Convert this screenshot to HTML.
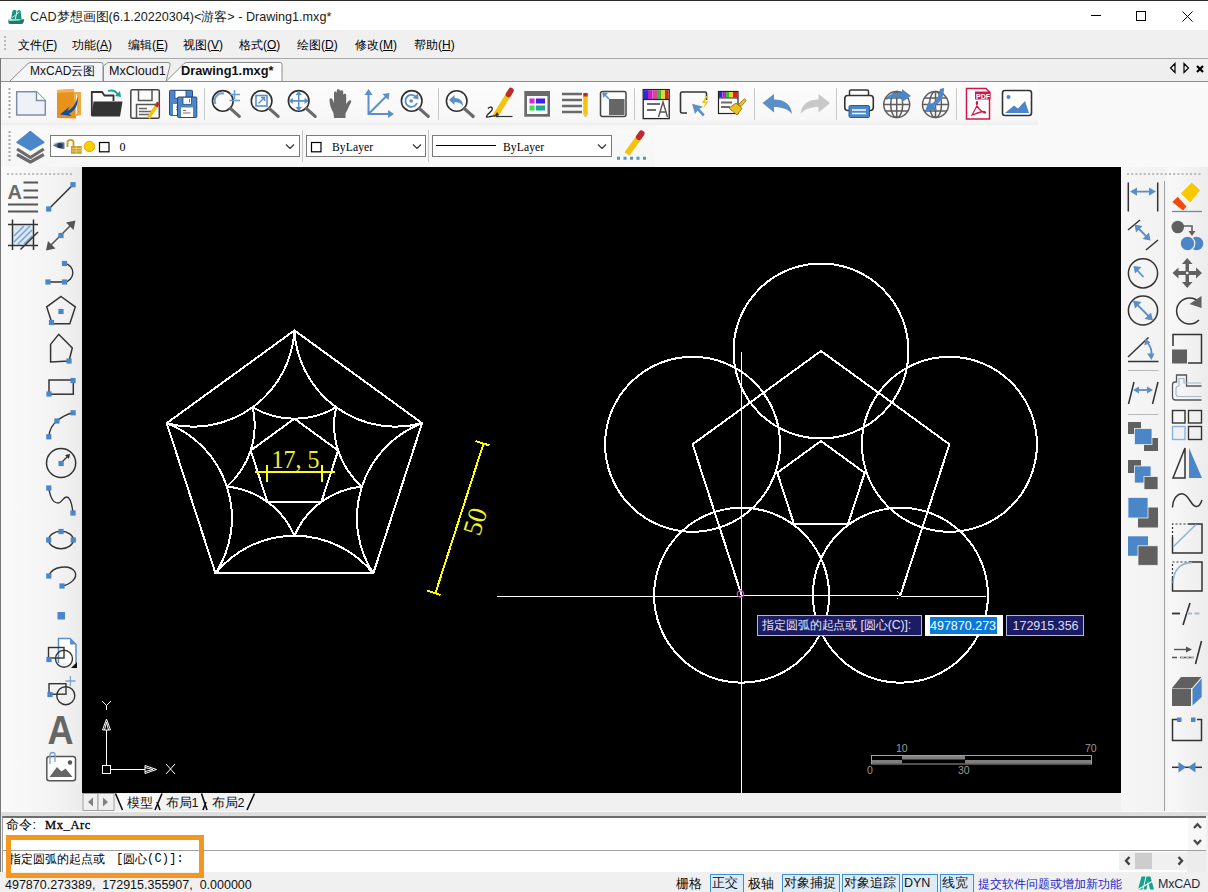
<!DOCTYPE html>
<html><head><meta charset="utf-8">
<style>
*{margin:0;padding:0;box-sizing:border-box}
html,body{width:1208px;height:892px;overflow:hidden;background:#f0f0f0;font-family:"Liberation Sans",sans-serif;font-size:12px;color:#000;line-height:16px}
.a{position:absolute}
#title{left:0;top:0;width:1208px;height:30px;background:#fff;border-top:1px solid #2b2b2b}
#menu{left:0;top:30px;width:1208px;height:28px;background:#f0f0f0}
#tabs{left:0;top:58px;width:1208px;height:24px;background:#efefef}
#tb0{left:0;top:82px;width:1208px;height:85px;background:#f9f9f9}
#tb1{left:0;top:82px;width:1038px;height:43px;background:linear-gradient(#fcfcfc,#f7f7f7 88%,#eeeeee)}
#tb2{left:0;top:125px;width:655px;height:42px;background:linear-gradient(#f4f4f4,#f9f9f9 12%,#f6f6f6)}
#canvas{left:82px;top:167px;width:1039px;height:626px;background:#000;overflow:hidden}
#ltb{left:0;top:167px;width:82px;height:644px;background:linear-gradient(to right,#fafafa,#f3f3f3 70%,#ebebeb)}
#rtb{left:1121px;top:167px;width:87px;height:644px;background:linear-gradient(to right,#f6f6f6,#f2f2f2 50%,#f8f8f8 55%,#ececec)}
#laytabs{left:82px;top:793px;width:1039px;height:18px;background:#f0f0f0}
#cmd{left:2px;top:816px;width:1204px;height:56px;background:#fff;border-top:2px solid #6d6d6d;border-left:1px solid #a0a0a0}
#status{left:0;top:872px;width:1208px;height:20px;background:#f0f0f0}
.sb{top:874px;height:19px;border:1px solid #3d8fd1;background:#dcebf8;font-size:12.5px;color:#111;text-align:left;padding-left:1px;line-height:17px;white-space:nowrap;overflow:hidden}
.mi{position:absolute;top:37px;font-size:12px}
</style></head><body>
<div id="title" class="a">
<svg class="a" style="left:0;top:0" width="30" height="30" viewBox="0 0 30 30">
<path d="M11 18 L12.5 10 Q13 8.8 14.5 9 L16 9.3 Q16.8 9.6 16.5 10.6 L14.8 18 Z" fill="#1a9080"/>
<path d="M15.8 18 L17.5 10 Q18 8.8 19.2 9.2 L20.2 9.6 Q21 10 20.8 11 L21.5 18 Z" fill="#1a9080"/>
<path d="M11.5 17 L19.5 11" stroke="#a8f0e0" stroke-width="1"/>
<path d="M8 18.8 L24 18.2 Q24.5 18 24 20 L23 22.3 Q22.5 23 21.5 23 L10 23 Q8.8 23 8.5 22 Z" fill="#1f7a6a"/>
<path d="M8.5 19.5 L20 19" stroke="#e0fff8" stroke-width="0.8"/>
</svg>
<div class="a" style="left:30px;top:8px;font-size:12.6px;white-space:nowrap;color:#1a1a1a">CAD梦想画图(6.1.20220304)&lt;游客&gt; - Drawing1.mxg*</div>
<div class="a" style="left:1091px;top:14px;width:10px;height:1px;background:#000"></div>
<div class="a" style="left:1136px;top:9.5px;width:10px;height:10px;border:1px solid #000"></div>
<svg class="a" style="left:1182px;top:9.5px" width="11" height="11"><path d="M0.5 0.5 L10.5 10.5 M10.5 0.5 L0.5 10.5" stroke="#000" stroke-width="1"/></svg>
</div>
<div id="menu" class="a">
<div class="a" style="left:4px;top:6px;width:2px;height:16px;background:repeating-linear-gradient(#bbb 0 2px,transparent 2px 4px)"></div>
<div class="mi a" style="left:18px;top:7px">文件(<u>F</u>)</div>
<div class="mi a" style="left:72px;top:7px">功能(<u>A</u>)</div>
<div class="mi a" style="left:128px;top:7px">编辑(<u>E</u>)</div>
<div class="mi a" style="left:183px;top:7px">视图(<u>V</u>)</div>
<div class="mi a" style="left:239px;top:7px">格式(<u>O</u>)</div>
<div class="mi a" style="left:297px;top:7px">绘图(<u>D</u>)</div>
<div class="mi a" style="left:355px;top:7px">修改(<u>M</u>)</div>
<div class="mi a" style="left:414px;top:7px">帮助(<u>H</u>)</div>
</div>
<div id="tabs" class="a">
<svg class="a" style="left:0;top:0" width="1208" height="24" viewBox="0 58 1208 24">
<path d="M0 58.5 H1208" stroke="#a8a8a8" stroke-width="1"/>
<path d="M9.5 81.5 L28 63.5 Q29 62.5 31 62.5 L101 62.5 Q103 62.5 103 64.5 L103 81.5" fill="#f4f6f9" stroke="#8c8c8c" stroke-width="1"/>
<path d="M103.5 81.5 L103.5 66 L108 62.5 L168 62.5 Q171 62.5 170 65.5 L166 81.5" fill="#f2f2f2" stroke="#8c8c8c" stroke-width="1"/>
<path d="M166 81.5 L184 63.5 Q185 62.5 187 62.5 L280 62.5 Q282 62.5 282 64.5 L282 81.5" fill="#fdfdfd" stroke="#8c8c8c" stroke-width="1"/>
<path d="M0 81.5 H1208" stroke="#8c8c8c" stroke-width="1"/>
</svg>
<div class="a" style="left:30px;top:5px;font-size:12px;color:#111">MxCAD云图</div>
<div class="a" style="left:109px;top:5px;font-size:12.6px;color:#111">MxCloud1</div>
<div class="a" style="left:181px;top:5px;font-size:12.8px;font-weight:bold;color:#111">Drawing1.mxg*</div>
<svg class="a" style="left:1168px;top:4px" width="40" height="14"><path d="M7 1.5 L2.5 6 L7 10.5 Z M16 1.5 L20.5 6 L16 10.5 Z" fill="none" stroke="#000" stroke-width="1.2"/><path d="M29 4 L35 10 M35 4 L29 10" stroke="#000" stroke-width="2.2"/></svg>
</div>
<div id="tb0" class="a"></div>
<div id="tb1" class="a"></div>
<svg class="a" style="left:0;top:82px" width="1208" height="43" viewBox="0 82 1208 43">
<defs>
<g id="lens"><circle cx="0" cy="0" r="10.3" fill="#fff" fill-opacity="0.5" stroke="#303030" stroke-width="1.6"/><path d="M7.5 7.5 L16.5 15.5" stroke="#6a6a6a" stroke-width="3.2" stroke-linecap="round"/></g>
</defs>
<!-- grip -->
<path d="M9.5 88 V119" stroke="#a8a8a8" stroke-width="2" stroke-dasharray="2 2"/>
<!-- new -->
<path d="M16.7 91.7 H36.5 L45.3 100.5 V115 H16.7 Z" fill="#eef2f8" stroke="#7d8ea6" stroke-width="1.5"/>
<path d="M36.5 91.7 V100.5 H45.3" fill="#fff" stroke="#7d8ea6" stroke-width="1.5"/>
<!-- import -->
<path d="M57 90 L74 89 L76 118.5 L57 118 Z" fill="#e8921e"/>
<path d="M74 92 H81 V115 L76 116 Z" fill="#f0a840"/>
<path d="M76.5 94 V114" stroke="#fff3d0" stroke-width="1"/>
<path d="M57 90 L74 89 L74 92 L57 93 Z" fill="#f5b050"/>
<path d="M77.5 97 C76 104 72 109 67.5 111 L69.5 106.5 L60 114.5 L71.5 116 L69 113.5 C75 111 78.5 105 77.5 97 Z" fill="#0f4fa0"/>
<!-- open -->
<path d="M91.8 115.8 V92 H102 L104.5 95.5 H113.5 V101" fill="none" stroke="#333" stroke-width="1.8"/>
<path d="M91.5 116.5 L93.5 101.5 H122.5 L120 116.5 Z" fill="#333"/>
<path d="M108 91 Q115 89 118 95" fill="none" stroke="#1aa090" stroke-width="1.8"/>
<path d="M115 96 L121 97 L120 91 Z" fill="#1aa090"/>
<!-- save -->
<rect x="130.8" y="89.8" width="28.5" height="28.5" rx="1.5" fill="#fbfbfb" stroke="#444" stroke-width="1.5"/>
<path d="M138.5 90 V100.5 H152 V90" fill="none" stroke="#555" stroke-width="1.5"/>
<path d="M136.5 118 V104.5 H158" fill="none" stroke="#555" stroke-width="1.5"/>
<path d="M139 108.5 H147 M139 111.5 H152 M139 114.5 H149" stroke="#666" stroke-width="1.3"/>
<path d="M148.5 118 L157 105" stroke="#f2c311" stroke-width="3.5"/>
<path d="M156 106.5 L158.5 102.5" stroke="#c0282d" stroke-width="3.5"/>
<!-- save as -->
<rect x="169.5" y="90.3" width="23" height="25" rx="1" fill="#4a86c8" stroke="#2a4878" stroke-width="1"/>
<rect x="175" y="90.5" width="11" height="8" fill="#fff" stroke="#2a4878" stroke-width="0.8"/>
<rect x="173" y="104" width="6" height="11" fill="#fff"/>
<path d="M176 107 H178.5 M176 109.5 H178.5" stroke="#555" stroke-width="0.8"/>
<rect x="177.5" y="97" width="19.3" height="20.5" rx="1" fill="#4a86c8" stroke="#2a4878" stroke-width="1"/>
<rect x="183" y="97.3" width="8.5" height="7" fill="#fff" stroke="#2a4878" stroke-width="0.8"/>
<path d="M189.5 99 V102.5" stroke="#777" stroke-width="1"/>
<rect x="181" y="107.5" width="12" height="9.5" fill="#fff"/>
<path d="M183 110.5 H186 M183 113 H190.5" stroke="#8a6a5a" stroke-width="1"/>
<!-- sep -->
<path d="M204.5 88 V120 M438.5 88 V120 M634.5 88 V120 M754.5 88 V120 M836.5 88 V120 M956.5 88 V120" stroke="#c8c8c8" stroke-width="1"/>
<!-- zoom in -->
<use href="#lens" x="222.8" y="100.9"/>
<path d="M215.5 104 A7.5 7.5 0 0 1 224 93.5" fill="none" stroke="#6a9ed0" stroke-width="2"/>
<path d="M234.5 90 V99 M229.5 94.5 H240 M229.5 100.5 H240" stroke="#6a9ed0" stroke-width="1.6"/>
<!-- zoom extents -->
<use href="#lens" x="261.6" y="100.9"/>
<rect x="256" y="95.5" width="11" height="10.5" fill="none" stroke="#5a8fc8" stroke-width="1.6"/>
<path d="M258.5 103.5 L264.5 97.5 M261 97.5 H264.5 V101" fill="none" stroke="#5a8fc8" stroke-width="1.4"/>
<!-- zoom pan -->
<use href="#lens" x="298.7" y="100.9"/>
<path d="M298.7 92 V110 M289.8 100.9 H307.6" stroke="#5a8fc8" stroke-width="1.6"/>
<path d="M298.7 91 L295.5 95 H302 Z M298.7 111 L295.5 107 H302 Z M288.8 100.9 L292.8 97.7 V104.1 Z M308.6 100.9 L304.6 97.7 V104.1 Z" fill="#5a8fc8"/>
<!-- hand -->
<path d="M333.5 113 C331 109 329.5 104 329.5 100 C329.5 98 331.5 97.5 332.5 99.5 L334 103 V93 C334 91 336.5 91 336.8 93 V101 V90.5 C337 88.8 339.7 88.8 340 90.5 V101 V91.5 C340.3 89.8 343 89.8 343.2 91.5 V102 V95 C343.5 93.3 346 93.3 346.2 95 V104 L348.5 101 C350 99.5 352 100.5 351 102.5 C349 106 347 111 345.5 113.5 V118 H334 Z" fill="#6a6a6a"/>
<!-- axes -->
<path d="M368.5 92 V114 H391 M368.5 114 L387 95.5" fill="none" stroke="#5a8fc8" stroke-width="2"/>
<path d="M368.5 89 L364.5 95 H372.5 Z M394 114 L388 110 V118 Z M389.5 93 L382.5 94 L388.5 100 Z" fill="#5a8fc8"/>
<!-- zoom previous -->
<use href="#lens" x="411.7" y="100.9"/>
<path d="M415.5 96.5 A6 6 0 1 0 417 103" fill="none" stroke="#5a8fc8" stroke-width="1.8"/>
<path d="M418 93.5 L418.5 99.5 L412.5 98 Z" fill="#5a8fc8"/>
<circle cx="411.2" cy="101" r="1.8" fill="#5a8fc8"/>
<!-- zoom back -->
<use href="#lens" x="456.7" y="101"/>
<path d="M449 100 L454.5 95 V98 C460 98 463 101 463 106 C461 103 458 102 454.5 102 V105 Z" fill="#5a8fc8"/>
<!-- pencil draw -->
<path d="M495 116.5 L509.5 93" stroke="#f2c311" stroke-width="5.5"/>
<path d="M508.5 94.5 L511 90.5" stroke="#c0282d" stroke-width="5.5" stroke-linecap="round"/>
<path d="M494 117 L497 112 L499 115 Z" fill="#333"/>
<path d="M488 108.5 C490 106 493 107 492 110 C491 112 486 115 486.5 117 C487.5 118 492 115.5 495 116" fill="none" stroke="#222" stroke-width="1.3"/>
<path d="M496 116.5 H512.5" stroke="#333" stroke-width="1.2"/>
<!-- layer props -->
<rect x="524.3" y="91" width="25.7" height="25.7" fill="#6a6a6a"/>
<rect x="527" y="96" width="20.5" height="18" fill="#fafafa"/>
<rect x="529.5" y="98.5" width="5" height="5" fill="#e020e0"/>
<rect x="536" y="98.5" width="9" height="5" fill="#4020e8"/>
<rect x="529.5" y="105.5" width="5" height="5" fill="#40e040"/>
<rect x="536" y="105.5" width="9" height="5" fill="#20a8a0"/>
<!-- lines -->
<path d="M562 94 H582 M562 100 H582 M562 106 H582 M562 112 H582" stroke="#6a6a6a" stroke-width="2.5"/>
<path d="M585.5 96 V114.5" stroke="#f2c311" stroke-width="4.5"/>
<path d="M585.5 93 V96.5" stroke="#c0282d" stroke-width="4.5"/>
<path d="M583.3 114.5 L585.5 117.5 L587.7 114.5 Z" fill="#f2c311"/>
<!-- quad -->
<rect x="600.5" y="91.5" width="25.5" height="25" rx="2" fill="#fafafa" stroke="#444" stroke-width="1.5"/>
<path d="M609 99 H624.5 V115 H609 Z" fill="#666"/>
<path d="M609 99 L603 93" stroke="#5a8fc8" stroke-width="1.6"/>
<path d="M602.5 92.5 L603 98 L608 93 Z" fill="#5a8fc8"/>
<!-- text style -->
<rect x="643.2" y="89.6" width="26" height="29" fill="#fff" stroke="#222" stroke-width="1.3"/>
<rect x="644" y="90.2" width="4" height="9" fill="#2a2ae0"/><rect x="648" y="90.2" width="4.5" height="9" fill="#c020c0"/><rect x="652.5" y="90.2" width="4.5" height="9" fill="#e040a0"/><rect x="657" y="90.2" width="4" height="9" fill="#30c030"/><rect x="661" y="90.2" width="4" height="9" fill="#f0d020"/><rect x="665" y="90.2" width="3.5" height="9" fill="#d02020"/>
<path d="M643 99.5 H669" stroke="#222" stroke-width="1.2"/>
<path d="M647 104 H660 M647 110 H656" stroke="#6a6a6a" stroke-width="2.2"/>
<path d="M658.5 117 L663 102 L667.5 117 M660 112 H666" fill="none" stroke="#555" stroke-width="1.4"/>
<!-- select -->
<path d="M687 113 H682 Q680.5 113 680.5 111.5 V93.5 Q680.5 92 682 92 H705 Q706.5 92 706.5 93.5 V100" fill="none" stroke="#333" stroke-width="1.6"/>
<path d="M693 103 L703.5 107.5 L699.5 109 L704 115.5 L702 117 L697.5 110.5 L694.5 113.5 Z" fill="#5a8fc8" transform="rotate(-8 698 110)"/>
<path d="M706 96 L702 103 H705.5 L703 109 L708.5 101.5 H705 L707.5 96 Z" fill="#f2c311"/>
<!-- match prop -->
<rect x="718.5" y="91.5" width="19.5" height="22" fill="#fff" stroke="#222" stroke-width="1.2"/>
<rect x="719" y="92" width="3.5" height="5.5" fill="#2a2ae0"/><rect x="722.5" y="92" width="3.5" height="5.5" fill="#c020c0"/><rect x="726" y="92" width="3.5" height="5.5" fill="#30c030"/><rect x="729.5" y="92" width="3.5" height="5.5" fill="#f0d020"/><rect x="733" y="92" width="4.5" height="5.5" fill="#d02020"/>
<path d="M718.5 98 H738" stroke="#222" stroke-width="1"/>
<path d="M721 102.5 H732 M721 107 H730" stroke="#6a6a6a" stroke-width="2"/>
<path d="M729 108 L736 103 L742 108.5 L737 115 Z" fill="#e8c020" stroke="#8a6a10" stroke-width="0.8"/>
<path d="M738.5 104.5 L743.5 99.5 C745 98 746.5 100 745.5 101.5 L741 106.5 Z" fill="#e8c020" stroke="#8a6a10" stroke-width="0.8"/>
<!-- undo -->
<path d="M762.5 103 L774 94 V99.5 C784 99.5 791 104 792 114 C788 109 782 107 774 107 V112.5 Z" fill="#5a8fc8"/>
<!-- redo -->
<path d="M830 103 L818.5 94 V99.5 C808.5 99.5 801.5 104 800.5 114 C804.5 109 810.5 107 818.5 107 V112.5 Z" fill="#c8c8c8"/>
<!-- print -->
<rect x="849.5" y="90" width="19" height="6" rx="1.5" fill="#fff" stroke="#333" stroke-width="1.5"/>
<rect x="844.8" y="95.5" width="28.5" height="15" rx="3" fill="#fff" stroke="#333" stroke-width="1.6"/>
<rect x="849" y="105.5" width="20.5" height="12" rx="1.5" fill="#4a86c8" stroke="#2a5a98" stroke-width="1"/>
<path d="M852 110 H866 M852 113.5 H866" stroke="#fff" stroke-width="1.3"/>
<!-- globes -->
<g fill="none" stroke="#5e5e5e" stroke-width="1.5">
<circle cx="896.7" cy="104.6" r="13"/><ellipse cx="896.7" cy="104.6" rx="6" ry="13"/><path d="M896.7 91.6 V117.6 M883.7 104.6 H909.7 M885.5 98 H908 M885.5 111 H908"/>
<circle cx="935.5" cy="104.6" r="13"/><ellipse cx="935.5" cy="104.6" rx="6" ry="13"/><path d="M935.5 91.6 V117.6 M922.5 104.6 H948.5 M924.3 98 H946.7 M924.3 111 H946.7"/>
</g>
<path d="M886 100 C888 94 895 92 902 93 V89 L911 96 L902 102 V98 C896 97.5 890 98 886 100 Z" fill="#4a86c8"/>
<path d="M940 89 L944 88 C944 96 941 103 934 106 L937 110 L925 111 L929 101 L931 104 C937 101 939 95 940 89 Z" fill="#4a86c8"/>
<!-- pdf -->
<path d="M966.5 88.5 H986 L989.5 92 V119 H966.5 Z" fill="#fff" stroke="#d01848" stroke-width="1.5"/>
<rect x="975" y="91.5" width="15.5" height="8" fill="#d01848"/>
<text x="976" y="98.5" font-family="Liberation Sans" font-size="7" font-weight="bold" fill="#fff">PDF</text>
<path d="M972 115 C975 110 978 104 977.5 102 C977 101 976 102 976.5 104 C977 107 981 112 985 113 C986 113.5 985.5 111 983 111.5 C980 112 975 114 972 115 Z" fill="none" stroke="#d01848" stroke-width="1.3"/>
<!-- image -->
<rect x="1002.5" y="90.5" width="29" height="25" rx="2.5" fill="#fff" stroke="#333" stroke-width="1.6"/>
<circle cx="1008.5" cy="97" r="2" fill="#4a86c8"/>
<path d="M1005 113 L1014 105.5 L1018 108.5 L1025 101 L1029 113 Z" fill="#4a86c8"/>
</svg>

<div id="tb2" class="a"></div>
<svg class="a" style="left:0;top:125px" width="660" height="42" viewBox="0 125 660 42">
<path d="M9.5 131 V161" stroke="#a8a8a8" stroke-width="2" stroke-dasharray="2 2"/>
<path d="M17 149 L30.4 157.5 L43.8 149" fill="none" stroke="#6a6a6a" stroke-width="3.2" stroke-linejoin="round"/>
<path d="M17 154.5 L30.4 162 L43.8 154.5" fill="none" stroke="#6a6a6a" stroke-width="3.2" stroke-linejoin="round"/>
<path d="M17 142.4 L30.4 131.5 L43.8 142.4 L30.4 150 Z" fill="#4a86c8" stroke="#4a86c8" stroke-width="1.5" stroke-linejoin="round"/>
<path d="M302.5 130 V162 M428.5 130 V162" stroke="#c8c8c8" stroke-width="1"/>
<rect x="50.5" y="135.5" width="249" height="21" fill="#fff" stroke="#7a7a7a" stroke-width="1"/>
<rect x="306.5" y="135.5" width="119" height="21" fill="#fff" stroke="#7a7a7a" stroke-width="1"/>
<rect x="432.5" y="135.5" width="179" height="21" fill="#fff" stroke="#7a7a7a" stroke-width="1"/>
<path d="M286 144.5 L290 148.5 L294 144.5 M413 144.5 L417 148.5 L421 144.5 M598 144.5 L602 148.5 L606 144.5" fill="none" stroke="#333" stroke-width="1.2"/>
<!-- eye -->
<path d="M53 145.5 Q58.5 141 64.5 142.5 V148.8 Q58.5 149.5 53 145.5 Z" fill="#5a7090"/>
<circle cx="60" cy="145.5" r="2.6" fill="#24375a"/>
<path d="M53 144.5 Q57 142 62 142" stroke="#a0b0c8" stroke-width="0.8" fill="none"/>
<!-- lock -->
<path d="M67.5 147 V142.5 Q67.5 139.8 70.5 139.8 Q73.5 139.8 73.5 142.5 V146" fill="none" stroke="#c89a20" stroke-width="1.8"/>
<rect x="71" y="146" width="10.7" height="7.8" fill="#c8a030"/>
<path d="M72 148.5 H81 M72 151 H81 M76.3 146 V154" stroke="#f0d878" stroke-width="0.8"/>
<!-- sun -->
<circle cx="89.4" cy="146.4" r="5.2" fill="#f8d000" stroke="#f0a000" stroke-width="1"/>
<rect x="99.5" y="142.5" width="9.5" height="9.3" fill="none" stroke="#000" stroke-width="1.2"/>
<rect x="311.5" y="142.5" width="9.5" height="9.3" fill="none" stroke="#000" stroke-width="1.2"/>
<path d="M436 145.5 H496" stroke="#000" stroke-width="1"/>
<!-- pencil -->
<path d="M627 154 L639.5 136.5" stroke="#f2c311" stroke-width="6"/>
<path d="M639 137 L641.5 133.5" stroke="#c0282d" stroke-width="6" stroke-linecap="round"/>
<path d="M617 158.3 H647" stroke="#5a8fc8" stroke-width="3" stroke-dasharray="3 3.5"/>
</svg>
<div class="a" style="left:119.5px;top:139px;font-family:'Liberation Serif',serif;font-size:12px">0</div>
<div class="a" style="left:332px;top:140px;font-family:'Liberation Serif',serif;font-size:11.6px;letter-spacing:0.1px">ByLayer</div>
<div class="a" style="left:503px;top:140px;font-family:'Liberation Serif',serif;font-size:11.6px;letter-spacing:0.1px">ByLayer</div>

<div id="ltb" class="a"></div>
<svg class="a" style="left:0;top:167px" width="82" height="645" viewBox="0 167 82 645">
<defs><rect id="bq" x="-2.6" y="-2.6" width="5.2" height="5.2" fill="#4a86c8"/></defs>
<path d="M7 174 H74" stroke="#a8a8a8" stroke-width="1.6" stroke-dasharray="2 2.2"/>
<!-- A= -->
<text x="7.5" y="198.5" font-family="Liberation Sans" font-weight="bold" font-size="20" fill="#6a6a6a">A</text>
<path d="M23.5 182.5 H38 M23.5 190.5 H38 M23.5 197.5 H38 M8 204.5 H38 M8 211.5 H38" stroke="#555" stroke-width="1.8"/>
<!-- hatch -->
<rect x="13" y="225" width="20" height="20" fill="#dfe8f2"/>
<path d="M14 236 L24 226 M14 242 L30 226 M18 244 L32 230 M24 244 L32 236" stroke="#7aa4d0" stroke-width="1.6"/>
<path d="M12.5 219.5 V250 M33.5 219.5 V250 M8 224.5 H38 M8 245.5 H38 M20.5 249.5 L38 232" fill="none" stroke="#333" stroke-width="1.5"/>
<!-- line -->
<path d="M48.7 209 L73 184.7" stroke="#333" stroke-width="1.5"/>
<use href="#bq" x="48.7" y="209"/><use href="#bq" x="73" y="184.7"/>
<!-- dim -->
<path d="M50 246 L72 224" stroke="#555" stroke-width="1.6"/>
<path d="M46 250.5 L48 241 L55.5 248.5 Z M75.5 220.5 L66 222.5 L73.5 230 Z" fill="#555"/>
<use href="#bq" x="61" y="235.5"/>
<!-- arc -->
<path d="M48 282 H64.5 M64.5 263.5 A9.3 9.3 0 0 1 64.5 282" fill="none" stroke="#333" stroke-width="1.4"/>
<use href="#bq" x="48" y="282"/><use href="#bq" x="64.5" y="282"/><use href="#bq" x="64.5" y="263.5"/>
<!-- polygon -->
<path d="M61 296.5 L75.3 306.9 L69.8 323.7 L52.2 323.7 L46.7 306.9 Z" fill="none" stroke="#333" stroke-width="1.5"/>
<use href="#bq" x="61" y="311.5"/><use href="#bq" x="51.5" y="322.5"/>
<!-- polyline -->
<path d="M50.6 362 V344.4 L58.7 334.3 L72.3 348 L69 361 Z" fill="none" stroke="#333" stroke-width="1.5"/>
<use href="#bq" x="69" y="361"/>
<!-- rect -->
<rect x="49" y="380" width="24.3" height="14.2" fill="none" stroke="#333" stroke-width="1.5"/>
<use href="#bq" x="73" y="380.5"/><use href="#bq" x="49" y="394"/>
<!-- arc 3p -->
<path d="M48.8 436.8 Q50 426 57 421 Q64 415 73 412.8" fill="none" stroke="#333" stroke-width="1.4"/>
<use href="#bq" x="48.8" y="436.8"/><use href="#bq" x="56.9" y="421"/><use href="#bq" x="73.1" y="412.8"/>
<!-- circle -->
<circle cx="61.1" cy="463" r="14.6" fill="none" stroke="#333" stroke-width="1.5"/>
<path d="M61 463 L68.5 455.5" stroke="#333" stroke-width="1.3"/><path d="M70 454 L65 455 L69 459 Z" fill="#333"/>
<use href="#bq" x="61.1" y="463.5"/>
<!-- spline -->
<path d="M48.8 488 C50 496 53 503 58 503 C62 503 63 497 66.5 497 C70 497 72 504 73 513" fill="none" stroke="#333" stroke-width="1.4"/>
<use href="#bq" x="48.8" y="488"/><use href="#bq" x="73" y="513"/>
<!-- ellipse -->
<ellipse cx="61" cy="540" rx="12.3" ry="8.7" fill="none" stroke="#333" stroke-width="1.4"/>
<use href="#bq" x="48.7" y="540"/><use href="#bq" x="73.3" y="540"/><use href="#bq" x="61" y="531.5"/>
<!-- ellipse arc -->
<path d="M48.8 576 C52 566 70 564 75 572 C78 578 70 585 61.8 586" fill="none" stroke="#333" stroke-width="1.4"/>
<use href="#bq" x="48.8" y="576"/><use href="#bq" x="62" y="586"/>
<!-- point -->
<rect x="57.5" y="612" width="7.5" height="7.5" fill="#4a86c8"/>
<!-- block -->
<path d="M58.5 663 V638.5 H70 L76 644.5 V663" fill="#fff" stroke="#5a8fc8" stroke-width="1.5"/>
<path d="M70 638.5 V644.5 H76 Z" fill="#5a8fc8"/>
<rect x="48.5" y="647.5" width="15.5" height="10.5" fill="none" stroke="#333" stroke-width="1.4"/>
<circle cx="64" cy="658.7" r="8.5" fill="none" stroke="#333" stroke-width="1.4"/>
<use href="#bq" x="49" y="659.5"/>
<path d="M71 668 L77 662 V668 Z" fill="#111"/>
<!-- insert -->
<rect x="49" y="683.7" width="17" height="10.5" fill="none" stroke="#333" stroke-width="1.4"/>
<circle cx="65.8" cy="695.7" r="9" fill="none" stroke="#333" stroke-width="1.4"/>
<use href="#bq" x="50" y="694.5"/>
<path d="M70.4 676 V686 M65.4 681 H75.4" stroke="#7aa4d0" stroke-width="1.3"/>
<!-- text A -->
<text x="47.5" y="744" font-family="Liberation Sans" font-weight="bold" font-size="40" fill="#666" textLength="26" lengthAdjust="spacingAndGlyphs">A</text>
<!-- image -->
<rect x="46.8" y="756.5" width="28.7" height="24.3" rx="2.5" fill="#fff" stroke="#555" stroke-width="1.5"/>
<path d="M49.5 777 L57 767 L61.5 771.5 L65.5 768.5 L72.5 777 Z" fill="#666"/>
<circle cx="70" cy="762.5" r="2.2" fill="#555"/>
<path d="M50 764 V755 Q50 752.5 52.5 752.5 Q55 752.5 55 755 V762" fill="none" stroke="#7aa4d0" stroke-width="1.3"/>
</svg>

<div id="rtb" class="a"></div>
<svg class="a" style="left:1121px;top:167px" width="87" height="645" viewBox="1121 167 87 645">
<path d="M1127 174 H1201" stroke="#a8a8a8" stroke-width="1.6" stroke-dasharray="2 2.2"/>
<path d="M1164.5 181 V811" stroke="#a0a0a0" stroke-width="1"/>
<!-- linear dim -->
<path d="M1128.3 182.5 V211.5 M1157.7 182.5 V211.5" stroke="#333" stroke-width="1.5"/>
<path d="M1134 191.6 H1152" stroke="#5a8fc8" stroke-width="1.8"/>
<path d="M1130 191.6 L1137 187.5 V195.7 Z M1156 191.6 L1149 187.5 V195.7 Z" fill="#5a8fc8"/>
<!-- aligned dim -->
<path d="M1128 230 L1140 220 M1146 250 L1158 240" stroke="#333" stroke-width="1.5"/>
<path d="M1137 227 L1148 238" stroke="#5a8fc8" stroke-width="1.8"/>
<path d="M1134.5 224.5 L1142.5 226 L1136 232.5 Z M1150.5 240.5 L1142.5 239 L1149 232.5 Z" fill="#5a8fc8"/>
<!-- radius -->
<circle cx="1143" cy="273.3" r="14.6" fill="none" stroke="#333" stroke-width="1.5"/>
<path d="M1143.5 277 L1137 270" stroke="#5a8fc8" stroke-width="1.8"/>
<path d="M1133.5 266 L1141.5 267 L1135 273.5 Z" fill="#5a8fc8"/>
<!-- diameter -->
<circle cx="1143" cy="310.5" r="14.6" fill="none" stroke="#333" stroke-width="1.5"/>
<path d="M1136 303.5 L1150 317.5" stroke="#5a8fc8" stroke-width="1.8"/>
<path d="M1133 300.5 L1141.5 302 L1135 308.5 Z M1153 320.5 L1144.5 319 L1151 312.5 Z" fill="#5a8fc8"/>
<!-- angular -->
<path d="M1128 357 L1148.5 337.5 M1128 361.5 H1158.5" stroke="#333" stroke-width="1.5"/>
<path d="M1147 342 Q1153 349 1151 356" fill="none" stroke="#5a8fc8" stroke-width="1.8"/>
<path d="M1145 338.5 L1144.5 345.5 L1150.5 342.5 Z M1151.5 360 L1147 353.5 L1154.5 353.5 Z" fill="#5a8fc8"/>
<path d="M1128 370.5 H1158.5 M1128 414.5 H1158.5" stroke="#b8b8b8" stroke-width="1"/>
<!-- continue dim -->
<path d="M1128.5 404 L1134 382 M1152.5 404 L1158 382" stroke="#333" stroke-width="1.5"/>
<path d="M1136 390 H1150" stroke="#5a8fc8" stroke-width="1.8"/>
<path d="M1133 390 L1139 386.5 V393.5 Z M1153 390 L1147 386.5 V393.5 Z" fill="#5a8fc8"/>
<!-- draw order 1 -->
<rect x="1128" y="422" width="13" height="12" fill="#606060"/>
<rect x="1144" y="438" width="14" height="13" fill="#606060"/>
<rect x="1134.5" y="428.5" width="17.5" height="16" fill="#4a86c8" stroke="#f0f0f0" stroke-width="0.8"/>
<!-- draw order 2 -->
<rect x="1128" y="460" width="13" height="13" fill="#606060"/>
<rect x="1134.5" y="466" width="16.5" height="17" fill="#4a86c8" stroke="#f0f0f0" stroke-width="0.8"/>
<rect x="1144" y="476.5" width="14" height="13" fill="#606060" stroke="#f0f0f0" stroke-width="0.8"/>
<!-- draw order 3 -->
<rect x="1138" y="507.5" width="20" height="20" fill="#606060"/>
<rect x="1128" y="497.5" width="20" height="20.5" fill="#4a86c8" stroke="#f0f0f0" stroke-width="0.8"/>
<!-- draw order 4 -->
<rect x="1128" y="536.3" width="20" height="19.5" fill="#4a86c8"/>
<rect x="1138" y="545.8" width="20" height="19.5" fill="#606060" stroke="#f0f0f0" stroke-width="0.8"/>
<!-- erase -->
<path d="M1180.8 193.4 L1191.8 182.4 L1200 190.2 L1190.2 202.4 Z" fill="#f8c800"/>
<path d="M1172.3 201.9 L1177.7 196.7 L1186.4 206.4 L1183 210.4 Z" fill="#f24a0a"/>
<path d="M1172 211.5 H1202" stroke="#6a8aa8" stroke-width="1.3"/>
<!-- copy -->
<circle cx="1177.8" cy="227" r="6.3" fill="#606060"/>
<path d="M1184 226 H1192 V232" fill="none" stroke="#606060" stroke-width="1.6"/>
<path d="M1188.5 231 L1195.5 231 L1192 236 Z" fill="#606060"/>
<circle cx="1196.5" cy="243.5" r="6.8" fill="#4a86c8"/>
<circle cx="1187.5" cy="243.5" r="7.3" fill="#4a86c8" stroke="#f3f3f3" stroke-width="1.2"/>
<!-- move -->
<path d="M1187.2 258 L1192.5 264 H1189 V271 H1196 V267.5 L1202 273 L1196 278.5 V275 H1189 V282 H1192.5 L1187.2 288 L1182 282 H1185.5 V275 H1178.5 V278.5 L1172.5 273 L1178.5 267.5 V271 H1185.5 V264 H1182 Z" fill="#606060"/>
<circle cx="1187.2" cy="273" r="1.3" fill="#f3f3f3"/>
<!-- rotate -->
<path d="M1199 302 A13 13 0 1 0 1199 320" fill="none" stroke="#333" stroke-width="1.5"/>
<path d="M1189.5 304 L1201.5 296 L1201.5 308 Z" fill="#606060"/>
<!-- scale -->
<path d="M1173 346 V334.5 H1201.5 V363 H1188" fill="none" stroke="#333" stroke-width="1.5"/>
<rect x="1172" y="349.5" width="15" height="14" fill="#606060"/>
<!-- offset -->
<path d="M1201.5 386 H1186.5 V375 H1176.5 V382 H1175 Q1172.5 382 1172.5 385 V397 Q1172.5 400 1175.5 400 H1201.5" fill="none" stroke="#555" stroke-width="1.3"/>
<path d="M1201.5 383 H1184 V378.5 H1179 V386 Q1176 386 1176 389 V394 Q1176 396.5 1178.5 396.5 H1201.5" fill="none" stroke="#a8b8c8" stroke-width="1.2"/>
<!-- array -->
<rect x="1172.5" y="410.5" width="12.5" height="12.5" fill="none" stroke="#333" stroke-width="1.4"/>
<rect x="1188.5" y="410.5" width="13" height="12.5" fill="none" stroke="#333" stroke-width="1.4"/>
<rect x="1172.5" y="426.5" width="12.5" height="13" fill="#eef2f8" stroke="#8ab0d8" stroke-width="1.4"/>
<rect x="1188.5" y="426.5" width="13" height="13" fill="none" stroke="#333" stroke-width="1.4"/>
<!-- mirror -->
<path d="M1185 448 V478 H1173 Z" fill="none" stroke="#333" stroke-width="1.5"/>
<path d="M1189 448 L1202 478 H1189 Z" fill="#4a86c8"/>
<!-- spline -->
<path d="M1172.5 507.5 C1173 498 1178 493 1183 494 C1189 495 1191 506 1196 506.5 C1199 507 1201 503 1202 500" fill="none" stroke="#333" stroke-width="1.5"/>
<!-- chamfer -->
<path d="M1172.5 537 V553 H1202 V524 H1188" fill="none" stroke="#333" stroke-width="1.5"/>
<path d="M1172.5 537 V524 H1188" fill="none" stroke="#333" stroke-width="1.2" stroke-dasharray="2 2"/>
<path d="M1173 547 L1196 524.5" stroke="#8ab0d8" stroke-width="1.4"/>
<!-- fillet -->
<path d="M1172.5 578 V591 H1202 V562 H1189" fill="none" stroke="#333" stroke-width="1.5"/>
<path d="M1172.5 578 V562 H1189" fill="none" stroke="#333" stroke-width="1.2" stroke-dasharray="2 2"/>
<path d="M1173 583 Q1174 563 1192 562.5" fill="none" stroke="#8ab0d8" stroke-width="1.4"/>
<!-- break -->
<path d="M1172 613.5 H1180" stroke="#333" stroke-width="1.8"/>
<path d="M1183 625 L1190 603" stroke="#333" stroke-width="1.6"/>
<path d="M1187 613.5 H1202" stroke="#a8b8c8" stroke-width="1.8" stroke-dasharray="5 2.5"/>
<!-- break at point -->
<path d="M1174 649.5 H1189" stroke="#555" stroke-width="1.4"/><path d="M1192 649.5 L1186 646.5 V652.5 Z" fill="#555"/>
<path d="M1172 657.5 H1177 M1180 657.5 H1194" stroke="#555" stroke-width="1.6"/>
<path d="M1181 657.5 H1194" stroke="#a8b8c8" stroke-width="1.6" stroke-dasharray="3 2"/>
<path d="M1195.5 664 L1201.5 641" stroke="#333" stroke-width="1.6"/>
<!-- 3d box -->
<path d="M1172 688 L1181 677 H1201.5 L1192 688 Z" fill="#606060"/>
<rect x="1172" y="688.5" width="19" height="17.5" fill="#606060"/>
<path d="M1192.5 689 L1201.7 678.5 V697 L1192.5 705.5 Z" fill="#4a86c8"/>
<!-- join -->
<path d="M1177 719.5 H1172.5 V740.5 H1201.5 V719.5 H1197" fill="none" stroke="#333" stroke-width="1.5"/>
<rect x="1177" y="717.5" width="4.5" height="4.5" fill="#4a86c8"/><rect x="1191" y="717.5" width="4.5" height="4.5" fill="#4a86c8"/>
<path d="M1179 719.5 H1181 M1191 719.5 H1193" stroke="#4a86c8" stroke-width="2"/>
<!-- compress arrows -->
<path d="M1172 767.3 H1202" stroke="#333" stroke-width="1.5"/>
<path d="M1186 767.3 L1178.5 762 V772.5 Z M1188 767.3 L1195.5 762 V772.5 Z" fill="#4a86c8"/>
</svg>

<div id="canvas" class="a">
<svg width="1039" height="626" viewBox="82 167 1039 626" style="position:absolute;left:0;top:0">
<g fill="none" stroke="#fff" stroke-width="2" shape-rendering="crispEdges">
<path d="M294.4 330.4 L422.1 423.2 L373.3 573.4 L215.5 573.4 L166.7 423.2 Z M294.4 418.7 L338.1 450.5 L321.4 501.9 L267.4 501.9 L250.7 450.5 Z M294.4 330.4 A101.6 101.6 0 0 0 422.1 423.2 M422.1 423.2 A101.6 101.6 0 0 0 373.3 573.4 M373.3 573.4 A101.6 101.6 0 0 0 215.5 573.4 M215.5 573.4 A101.6 101.6 0 0 0 166.7 423.2 M166.7 423.2 A101.6 101.6 0 0 0 294.4 330.4 M252.7 407.3 A81.8 81.8 0 0 0 336.1 407.3 M336.1 407.3 A81.8 81.8 0 0 0 361.9 486.6 M361.9 486.6 A81.8 81.8 0 0 0 294.4 535.7 M294.4 535.7 A81.8 81.8 0 0 0 226.9 486.6 M226.9 486.6 A81.8 81.8 0 0 0 252.7 407.3"/>
<path d="M741.6 595.2 L692.6 444.3 L821.0 351.0 L949.4 444.3 L900.4 595.2 M821.0 441.0 L864.7 472.8 L848.0 524.2 L794.0 524.2 L777.3 472.8 Z"/>
<circle cx="821.0" cy="351.0" r="87.5"/><circle cx="949.4" cy="444.3" r="87.5"/><circle cx="900.4" cy="595.2" r="87.5"/><circle cx="741.6" cy="595.2" r="87.5"/><circle cx="692.6" cy="444.3" r="87.5"/>
</g>
<path d="M497 596.5 H741 M741 595.5 H901 M901 596.5 H986 M741.5 351.5 V793 M897 591 L900.5 595 M896.5 598 L897.5 598" stroke="#fff" stroke-width="1" fill="none" shape-rendering="crispEdges"/>
<g fill="none" stroke="#ffff00" stroke-width="2" shape-rendering="crispEdges">
<path d="M255 472 H335 M267 465 V482 M322 465 V482"/>
<path d="M435.5 593 L483.3 444.3 M427 590.5 L440.5 595 M475.5 441 L489.5 445.5"/>
</g>
<text x="271.5" y="468" fill="#eeee30" font-family="Liberation Serif" font-size="26" textLength="48" lengthAdjust="spacingAndGlyphs" xml:space="preserve">17, 5</text>
<text x="0" y="0" fill="#f0f030" font-family="Liberation Serif" font-size="26.5" transform="translate(479.5 537) rotate(-72.5)" textLength="27" lengthAdjust="spacingAndGlyphs">50</text>
<circle cx="740.5" cy="594" r="3.2" fill="none" stroke="#d040d0" stroke-width="1.2"/>
<g fill="none" stroke="#fff" stroke-width="1">
<rect x="102.5" y="765.5" width="8" height="8"/>
<path d="M106.5 765.5 V730 M102.5 730 H110.5 L106.5 719 Z M104.5 730 L106.5 722 L108.5 730 M110.5 769.5 H145 M145 765.5 V773.5 L156.5 769.5 Z M145 767.5 L153 769.5 L145 771.5"/>
<path d="M102 701 L106.5 705.5 L111 701 M106.5 705.5 V710 M166 764 L175 774 M175 764 L166 774"/>
</g>
<g>
<rect x="871.5" y="755.5" width="220" height="8.5" fill="none" stroke="#a0a0a0" stroke-width="1"/>
<rect x="902" y="756" width="63" height="3.5" fill="#808080"/>
<rect x="872" y="760" width="30" height="3.5" fill="#808080"/>
<rect x="965" y="760" width="126" height="3.5" fill="#808080"/>
<g fill="#9a9a9a" font-family="Liberation Sans" font-size="10.5"><text x="896" y="752">10</text><text x="1085" y="752">70</text><text x="867" y="774">0</text><text x="958" y="774">30</text></g>
</g>
</svg>
</div>
<div class="a" style="left:757px;top:615px;width:165px;height:21px;background:#1c1c64;border:1px solid #b4b4dc"></div>
<div class="a" style="left:762px;top:617px;font-size:12.3px;color:#e4e4f4;white-space:nowrap;letter-spacing:-0.1px">指定圆弧的起点或 [圆心(C)]:</div>
<div class="a" style="left:925px;top:615px;width:78px;height:21px;background:#fff"></div>
<div class="a" style="left:930px;top:617px;width:67px;height:17px;background:#0a78d8"></div>
<div class="a" style="left:930px;top:618px;font-size:12.5px;color:#fff;white-space:nowrap">497870.273</div>
<div class="a" style="left:1006px;top:615px;width:78px;height:21px;background:#1c1c64;border:1px solid #b4b4dc"></div>
<div class="a" style="left:1012.5px;top:618px;font-size:12.5px;color:#dcdcf0;white-space:nowrap">172915.356</div>
<div id="laytabs" class="a"></div>
<svg class="a" style="left:0;top:793px" width="1208" height="99" viewBox="0 793 1208 99">
<rect x="83" y="793.5" width="15" height="17" fill="#f0f0f0" stroke="#a0a0a0" stroke-width="1"/>
<rect x="98" y="793.5" width="16" height="17" fill="#f0f0f0" stroke="#a0a0a0" stroke-width="1"/>
<path d="M93 797.5 L88 802 L93 806.5 Z M103 797.5 L108 802 L103 806.5 Z" fill="#808080"/>
<path d="M115.5 793.5 L122.5 810 H155 L162 793.5 Z" fill="#fafafa"/>
<path d="M162 793.5 L155.5 810 H207 L201.5 793.5 Z M201.5 793.5 L207 810 H247 L254.5 793.5 Z" fill="#f3f3f3"/>
<path d="M122.5 810 H155 M158 810 H205 M209 810 H247" stroke="#e8e8e8" stroke-width="1"/>
<path d="M115.5 793.5 L122.5 810 M162 793.5 L155 810 M157 802 L160 810 M201.5 793.5 L207 810 M206 802 L203 810 M254.5 793.5 L247 810" fill="none" stroke="#111" stroke-width="1.6"/>
</svg>
<div class="a" style="left:127px;top:795px;font-size:12.5px;color:#111">模型</div>
<div class="a" style="left:166px;top:795px;font-size:12.5px;color:#111;letter-spacing:-0.3px">布局1</div>
<div class="a" style="left:212px;top:795px;font-size:12.5px;color:#111;letter-spacing:-0.3px">布局2</div>

<div class="a" style="left:1px;top:811px;width:1207px;height:1px;background:#fbfbfb"></div>
<div class="a" style="left:1px;top:812px;width:1207px;height:4px;background:#dedede"></div>
<div id="cmd" class="a"></div>
<div class="a" style="left:2px;top:850px;width:1204px;height:1px;background:#a0a0a0"></div>
<div class="a" style="left:5.5px;top:816.5px;font-size:12.5px;color:#000;letter-spacing:0.5px">命令:</div>
<div class="a" style="left:45px;top:817px;font-family:'Liberation Serif',serif;font-size:12.5px;color:#000;letter-spacing:0.6px;-webkit-text-stroke:0.3px #000">Mx_Arc</div>
<div class="a" style="left:8.5px;top:850.5px;font-size:12px;color:#000">指定圆弧的起点或</div>
<div class="a" style="left:116px;top:851px;font-family:'Liberation Mono',monospace;font-size:12px;color:#000">[</div>
<div class="a" style="left:122.5px;top:850.5px;font-size:12px;color:#000">圆心</div>
<div class="a" style="left:147px;top:851px;font-family:'Liberation Mono',monospace;font-size:12px;color:#000;letter-spacing:0.2px">(C)]:</div>

<svg class="a" style="left:1186px;top:818px" width="22" height="54" viewBox="1186 818 22 54">
<rect x="1188" y="818" width="18" height="32" fill="#f7f7f7"/><path d="M1194 828 L1197.5 824.3 L1201 828 M1194 840 L1197.5 843.7 L1201 840" fill="none" stroke="#4a4a4a" stroke-width="2.4"/>
</svg>
<div class="a" style="left:1119px;top:852px;width:68px;height:18px;background:#f0f0f0"></div>
<div class="a" style="left:1187px;top:851px;width:19px;height:21px;background:#ececec"></div>
<div class="a" style="left:1135px;top:853px;width:17px;height:16px;background:#cdcdcd"></div>
<svg class="a" style="left:1119px;top:852px" width="68" height="18" viewBox="1119 852 68 18">
<path d="M1129.5 857 L1126 860.8 L1129.5 864.6 M1178.5 857 L1182 860.8 L1178.5 864.6" fill="none" stroke="#444" stroke-width="2.4"/>
</svg>

<div id="status" class="a"></div>
<div class="a" style="left:5px;top:876.5px;font-size:12.5px;color:#111;white-space:pre">497870.273389,  172915.355907,  0.000000</div>
<div class="a" style="left:676px;top:876px;font-size:12.5px;color:#111">栅格</div>
<div class="a sb" style="left:710px;width:34px">正交</div>
<div class="a" style="left:748px;top:876px;font-size:12.5px;color:#111">极轴</div>
<div class="a sb" style="left:782px;width:58px">对象捕捉</div>
<div class="a sb" style="left:841.5px;width:58px">对象追踪</div>
<div class="a sb" style="left:902px;width:35.5px">DYN</div>
<div class="a sb" style="left:940px;width:33.5px">线宽</div>
<div class="a" style="left:978px;top:876px;font-size:12.2px;color:#2424c8;white-space:nowrap">提交软件问题或增加新功能</div>
<svg class="a" style="left:1136px;top:875px" width="20" height="16" viewBox="0 0 20 16">
<path d="M2 14.5 L5.5 1.5 H9.5 L6.5 14.5 Z M7.5 14.5 L10.5 1.5 H14.5 L18 14.5 H14 L12 6 L10.5 14.5 Z" fill="#17a090"/>
<path d="M1 15 L17 6" stroke="#e8f8f4" stroke-width="1.3"/>
</svg>
<div class="a" style="left:1158px;top:876px;font-size:12.5px;color:#1d2b3a;letter-spacing:-0.2px">MxCAD</div>

<div class="a" style="left:5.5px;top:835px;width:198px;height:43px;border:5.5px solid #f7961e"></div>
<div class="a" style="left:0;top:58px;width:1px;height:814px;background:#777"></div>
</body></html>
